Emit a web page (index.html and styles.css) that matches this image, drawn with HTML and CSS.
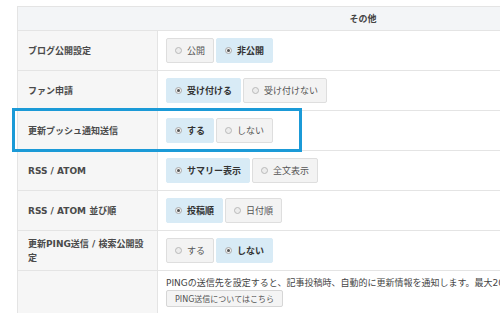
FILE: index.html
```html
<!DOCTYPE html>
<html lang="ja">
<head>
<meta charset="utf-8">
<link rel="stylesheet" href="styles.css">
</head>
<body>
<div class="page">
<table class="settings">
  <colgroup><col class="col-label"><col class="col-value"></colgroup>
  <tr class="head"><th colspan="2">その他</th></tr>
  <tr>
    <td class="label">ブログ公開設定</td>
    <td class="value"><div class="opts">
      <span class="opt"><span class="radio"></span>公開</span>
      <span class="opt on"><span class="radio"></span>非公開</span>
    </div></td>
  </tr>
  <tr>
    <td class="label">ファン申請</td>
    <td class="value"><div class="opts">
      <span class="opt on"><span class="radio"></span>受け付ける</span>
      <span class="opt"><span class="radio"></span>受け付けない</span>
    </div></td>
  </tr>
  <tr>
    <td class="label hl-cell">更新プッシュ通知送信<span class="highlight"></span></td>
    <td class="value"><div class="opts">
      <span class="opt on"><span class="radio"></span>する</span>
      <span class="opt"><span class="radio"></span>しない</span>
    </div></td>
  </tr>
  <tr>
    <td class="label">RSS / ATOM</td>
    <td class="value"><div class="opts">
      <span class="opt on"><span class="radio"></span>サマリー表示</span>
      <span class="opt"><span class="radio"></span>全文表示</span>
    </div></td>
  </tr>
  <tr>
    <td class="label">RSS / ATOM 並び順</td>
    <td class="value"><div class="opts">
      <span class="opt on"><span class="radio"></span>投稿順</span>
      <span class="opt"><span class="radio"></span>日付順</span>
    </div></td>
  </tr>
  <tr>
    <td class="label">更新PING送信 / 検索公開設定</td>
    <td class="value"><div class="opts">
      <span class="opt"><span class="radio"></span>する</span>
      <span class="opt on"><span class="radio"></span>しない</span>
    </div></td>
  </tr>
  <tr class="ping">
    <td class="label"></td>
    <td class="value">
      <p class="note">PINGの送信先を設定すると、記事投稿時、自動的に更新情報を通知します。最大20件</p>
      <span class="small-btn">PING送信についてはこちら</span>
    </td>
  </tr>
</table>
</div>
</body>
</html>
```

FILE: styles.css
```css
html, body {
  margin: 0;
  padding: 0;
  background: #ffffff;
  overflow: hidden;
}
body {
  width: 500px;
  height: 313px;
  font-family: "DejaVu Sans", "Noto Sans CJK JP", sans-serif;
  font-size: 9px;
  color: #444;
}
.page {
  padding: 6px 0 0 17px;
}
.settings {
  width: 692px;
  border-collapse: collapse;
  table-layout: fixed;
}
.col-label { width: 140px; }
.settings th,
.settings td {
  border: 1px solid #e4e4e4;
  padding: 0;
}
.head th {
  height: 23px;
  background: #f3f5f7;
  font-weight: bold;
  color: #444;
  text-align: center;
}
.label {
  height: 39px;
  background: #f6f6f6;
  font-weight: bold;
  color: #4a4a4a;
  padding: 0 12px 0 10px !important;
  line-height: 14px;
  vertical-align: middle;
}
.value {
  padding: 0 8px !important;
  vertical-align: middle;
  background: #fff;
}
.opts {
  display: flex;
  gap: 2px;
  align-items: center;
}
.opt {
  display: inline-flex;
  align-items: center;
  gap: 5px;
  height: 25px;
  box-sizing: border-box;
  padding: 0 8px;
  border: 1px solid #dedede;
  border-radius: 2px;
  background: #f3f3f3;
  color: #555;
  white-space: nowrap;
}
.opt.on {
  background: #d8ebf6;
  border-color: #d8ebf6;
  color: #333;
  font-weight: bold;
}
.radio {
  width: 7px;
  height: 7px;
  box-sizing: border-box;
  border: 1px solid #b9b9b9;
  border-radius: 50%;
  background: #ececec;
  position: relative;
  flex: none;
}
.opt.on .radio {
  background: #f4f4f4;
  border-color: #a8a8a8;
}
.opt.on .radio::after {
  content: "";
  position: absolute;
  left: 1px;
  top: 1px;
  width: 3px;
  height: 3px;
  border-radius: 50%;
  background: #555;
}
.hl-cell {
  position: relative;
}
.highlight {
  position: absolute;
  left: -6px;
  top: -3px;
  width: 290px;
  height: 44px;
  box-sizing: border-box;
  border: 3px solid #1b9ad7;
  pointer-events: none;
}
.ping .label { height: 43px; }
.ping .value {
  vertical-align: top;
  padding: 5px 8px 0 !important;
}
.note {
  margin: 0;
  white-space: nowrap;
  line-height: 14px;
  color: #444;
}
.small-btn {
  display: inline-flex;
  align-items: center;
  height: 17px;
  box-sizing: border-box;
  padding: 0 8px;
  border: 1px solid #d6d6d6;
  border-radius: 2px;
  background: #f4f4f4;
  color: #555;
  font-size: 8px;
}
```
